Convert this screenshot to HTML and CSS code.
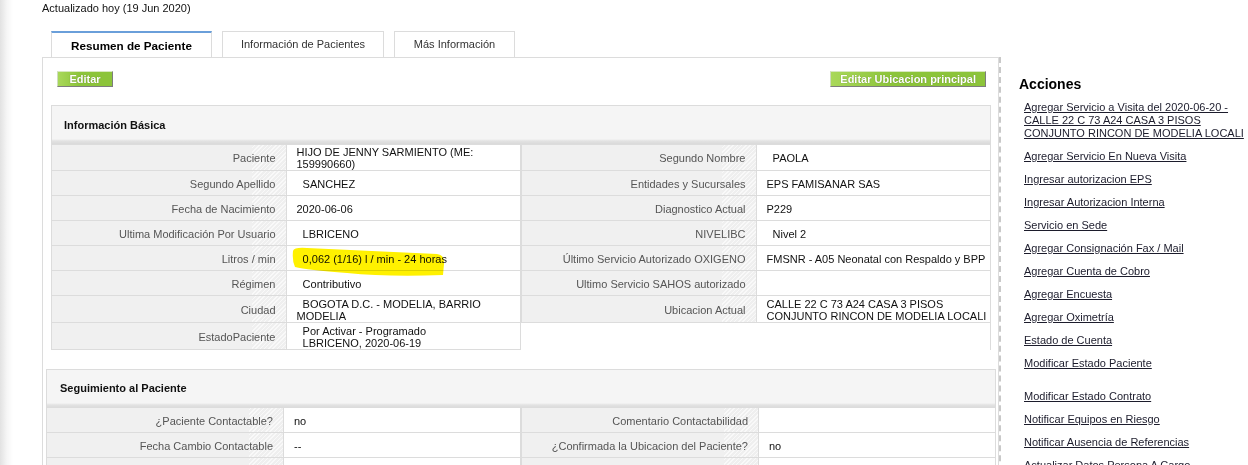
FILE: index.html
```html
<!DOCTYPE html>
<html lang="es">
<head>
    <meta charset="UTF-8">
    <title>Resumen de Paciente</title>
    <link rel="stylesheet" href="styles.css">
</head>
<body>
<div class="page">
    <div class="main">
        <div class="updated">Actualizado hoy (19 Jun 2020)</div>
        <div class="tabs">
            <div class="tab active">Resumen de Paciente</div>
            <div class="tab tab-info">Información de Pacientes</div>
            <div class="tab tab-more">Más Información</div>
        </div>
        <div class="panel-wrap">
            <div class="panel">
                <div class="buttons">
                    <button class="btn">Editar</button>
                    <button class="btn">Editar Ubicacion principal</button>
                </div>

                <div class="section basic">
                    <div class="section-title">Información Básica</div>
                    <div class="tables">
                        <table class="data">
                            <tr class="r2"><td class="label">Paciente</td><td>HIJO DE JENNY SARMIENTO (ME: 159990660)</td></tr>
                            <tr><td class="label">Segundo Apellido</td><td>&nbsp;&nbsp;SANCHEZ</td></tr>
                            <tr><td class="label">Fecha de Nacimiento</td><td>2020-06-06</td></tr>
                            <tr><td class="label">Ultima Modificación Por Usuario</td><td>&nbsp;&nbsp;LBRICENO</td></tr>
                            <tr><td class="label">Litros / min</td><td class="marked">
                                <svg class="marker" width="170" height="34" viewBox="0 0 170 34"><path d="M6,5 Q7,1 20,2 L150,8 Q158,9 157,18 L156,29 Q100,31 60,27 Q20,24 8,21 Q5,15 6,5 Z" fill="#fff100"/></svg>
                                &nbsp;&nbsp;0,062 (1/16) l / min - 24 horas</td></tr>
                            <tr><td class="label">Régimen</td><td>&nbsp;&nbsp;Contributivo</td></tr>
                            <tr class="r3"><td class="label">Ciudad</td><td>&nbsp;&nbsp;BOGOTA D.C. - MODELIA, BARRIO MODELIA</td></tr>
                            <tr class="r3"><td class="label">EstadoPaciente</td><td>&nbsp;&nbsp;Por Activar - Programado<br>&nbsp;&nbsp;LBRICENO, 2020-06-19</td></tr>
                        </table>
                        <table class="data">
                            <tr class="r2"><td class="label">Segundo Nombre</td><td>&nbsp;&nbsp;PAOLA</td></tr>
                            <tr><td class="label">Entidades y Sucursales</td><td>EPS FAMISANAR SAS</td></tr>
                            <tr><td class="label">Diagnostico Actual</td><td>P229</td></tr>
                            <tr><td class="label">NIVELIBC</td><td>&nbsp;&nbsp;Nivel 2</td></tr>
                            <tr><td class="label">Último Servicio Autorizado OXIGENO</td><td class="nowrap">FMSNR - A05 Neonatal con Respaldo y BPP</td></tr>
                            <tr><td class="label">Ultimo Servicio SAHOS autorizado</td><td></td></tr>
                            <tr class="r3"><td class="label">Ubicacion Actual</td><td class="nowrap">CALLE 22 C 73 A24 CASA 3 PISOS<br>CONJUNTO RINCON DE MODELIA LOCALI</td></tr>
                        </table>
                    </div>
                </div>

                <div class="section follow">
                    <div class="section-title">Seguimiento al Paciente</div>
                    <div class="tables">
                        <table class="data">
                            <tr><td class="label">¿Paciente Contactable?</td><td>no</td></tr>
                            <tr><td class="label">Fecha Cambio Contactable</td><td>--</td></tr>
                            <tr><td class="label"></td><td></td></tr>
                        </table>
                        <table class="data">
                            <tr><td class="label">Comentario Contactabilidad</td><td></td></tr>
                            <tr><td class="label">¿Confirmada la Ubicacion del Paciente?</td><td>no</td></tr>
                            <tr><td class="label"></td><td></td></tr>
                        </table>
                    </div>
                </div>
            </div>
        </div>
    </div>

    <div class="sidebar">
        <h2>Acciones</h2>
        <ul class="actions">
            <li><a href="#">Agregar Servicio a Visita del 2020-06-20 -<br>CALLE 22 C 73 A24 CASA 3 PISOS<br>CONJUNTO RINCON DE MODELIA LOCALI</a></li>
            <li><a href="#">Agregar Servicio En Nueva Visita</a></li>
            <li><a href="#">Ingresar autorizacion EPS</a></li>
            <li><a href="#">Ingresar Autorizacion Interna</a></li>
            <li><a href="#">Servicio en Sede</a></li>
            <li><a href="#">Agregar Consignación Fax / Mail</a></li>
            <li><a href="#">Agregar Cuenta de Cobro</a></li>
            <li><a href="#">Agregar Encuesta</a></li>
            <li><a href="#">Agregar Oximetría</a></li>
            <li><a href="#">Estado de Cuenta</a></li>
            <li><a href="#">Modificar Estado Paciente</a></li>
            <li class="sep"></li>
            <li><a href="#">Modificar Estado Contrato</a></li>
            <li><a href="#">Notificar Equipos en Riesgo</a></li>
            <li><a href="#">Notificar Ausencia de Referencias</a></li>
            <li><a href="#">Actualizar Datos Persona A Cargo</a></li>
        </ul>
    </div>
</div>
</body>
</html>
```

FILE: styles.css
```css
body {
    margin: 0;
    font-family: "Liberation Sans", Arial, sans-serif;
    font-size: 11px;
    color: #111;
    background-color: #fff;
}
.page {
    display: flex;
    height: 465px;
    overflow: hidden;
    background: linear-gradient(to right, #e2e2e2, #f6f6f6 7px, #fff 13px);
}
.main {
    width: 959px;
    padding-left: 42px;
    flex-shrink: 0;
}
.updated {
    margin-top: 2px;
    line-height: 13px;
}
.tabs {
    display: flex;
    gap: 10px;
    margin-top: 16px;
    padding-left: 9px;
}
.tab {
    width: 162px;
    height: 26px;
    box-sizing: border-box;
    border: 1px solid #dcdcdc;
    border-bottom: none;
    background-color: #fff;
    color: #333;
    display: flex;
    align-items: center;
    justify-content: center;
    padding-bottom: 1px;
}
.tab.active {
    width: 161px;
    border-top: 2px solid #6a9fda;
    color: #000;
    font-weight: bold;
    font-size: 11.7px;
    padding: 1px 0 0;
}
.tab-more {
    width: 121px;
}
.panel-wrap {
    border-right: 2px dashed #c9c9c9;
}
.panel {
    border: 1px solid #dcdcdc;
    border-bottom: none;
    padding-top: 13px;
    height: 420px;
}
.buttons {
    display: flex;
    justify-content: space-between;
    margin: 0 12px 0 14px;
}
.btn {
    height: 16px;
    padding: 0 9px;
    font-family: "Liberation Sans", Arial, sans-serif;
    font-size: 11px;
    font-weight: bold;
    line-height: 14px;
    color: #fff;
    text-shadow: 0 0 1px #5a7a20;
    background: linear-gradient(to right, #a9d85a, #8cc43a 40%, #8cc43a);
    border: 1px solid;
    border-color: #d8e8c0 #7d7d7d #7d7d7d #cfdcc0;
    cursor: pointer;
}
.btn:first-child {
    width: 56px;
}
.section {
    border: 1px solid #dcdcdc;
    border-bottom: none;
}
.basic {
    margin: 18px 7px 0 8px;
}
.follow {
    margin: 19px 2px 0 3px;
}
.section-title {
    height: 38px;
    line-height: 38px;
    padding-left: 12px;
    font-weight: bold;
    color: #111;
    background: linear-gradient(to bottom, #f5f5f5, #f5f5f5 33px, #e2e2e2 35px, #dadada 38px);
}
.follow .section-title {
    height: 37px;
    line-height: 37px;
    padding-left: 13px;
}
.tables {
    display: flex;
    align-items: flex-start;
    margin: 0 -1px;
}
.data {
    width: 50%;
    table-layout: fixed;
    border-collapse: collapse;
    border: 1px solid #dcdcdc;
}
.data td {
    height: 23px;
    padding: 1px 10px 0;
    line-height: 12px;
    border: 1px solid #dcdcdc;
    vertical-align: middle;
    width: 50%;
}
.data tr.r2 td {
    height: 24px;
}
.data tr.r3 td {
    height: 25px;
}
.data td.nowrap {
    white-space: nowrap;
    overflow: visible;
}
.data td.label {
    text-align: right;
    color: #555;
    background:
        repeating-linear-gradient(-45deg, #f9f9f9 0 1px, #efefef 1px 3px) right top / 34px 100% no-repeat,
        #f0f0f0;
}
.data td.marked {
    position: relative;
}
.marker {
    position: absolute;
    left: 0;
    top: 0;
    mix-blend-mode: multiply;
    z-index: 2;
}
.sidebar {
    flex: 1;
    padding: 76px 0 0 18px;
}
.sidebar h2 {
    margin: 0;
    font-size: 14px;
    line-height: 16px;
    font-weight: bold;
    color: #000;
}
.actions {
    display: flex;
    flex-direction: column;
    list-style: none;
    margin: 9px 0 0;
    padding: 0 0 0 5px;
    white-space: nowrap;
}
.actions li {
    line-height: 13px;
    margin-bottom: 10px;
}
.actions li.sep {
    height: 0;
}
.actions a {
    color: #1c1c2c;
    text-decoration: underline;
}
```
